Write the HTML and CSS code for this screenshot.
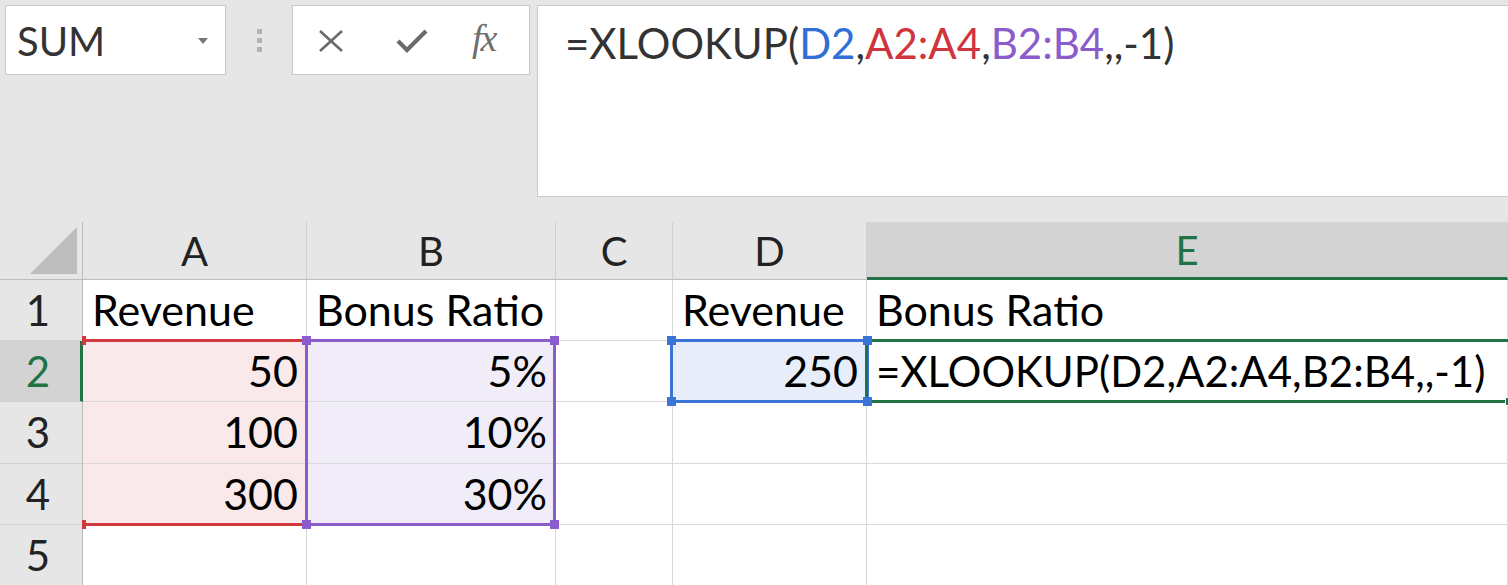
FILE: index.html
```html
<!DOCTYPE html>
<html>
<head>
<meta charset="utf-8">
<link rel="stylesheet" href="styles.css">
</head>
<body>
<div class="app">
  <div class="topbar">
    <div class="namebox"><span class="name">SUM</span><span class="caret"></span></div>
    <div class="grip"><i></i><i></i><i></i></div>
    <div class="fxbtns">
      <svg class="ic-x" width="28" height="26" viewBox="0 0 28 26"><path d="M3 3 L25 23 M25 3 L3 23" stroke="#6a6a6a" stroke-width="2.6" fill="none"/></svg>
      <svg class="ic-ok" width="34" height="26" viewBox="0 0 34 26"><path d="M3 13 L12 22 L31 3" stroke="#6a6a6a" stroke-width="4.2" fill="none" stroke-linejoin="miter"/></svg>
      <span class="fx">fx</span>
    </div>
    <div class="formula">=XLOOKUP(<span class="r-blue">D2</span>,<span class="r-red">A2:A4</span>,<span class="r-purple">B2:B4</span>,,-1)</div>
  </div>

  <div class="sheet">
    <div class="rw r0">
      <div class="h corner"><div class="tri"></div></div>
      <div class="h col">A</div>
      <div class="h col">B</div>
      <div class="h col">C</div>
      <div class="h col">D</div>
      <div class="h col sel-col">E</div>
    </div>
    <div class="rw r1">
      <div class="h row">1</div>
      <div class="c">Revenue</div>
      <div class="c">Bonus Ratio</div>
      <div class="c"></div>
      <div class="c">Revenue</div>
      <div class="c">Bonus Ratio</div>
    </div>
    <div class="rw r2">
      <div class="h row sel-row">2</div>
      <div class="c num red-bg">50</div>
      <div class="c num purple-bg">5%</div>
      <div class="c"></div>
      <div class="c num blue-bg">250</div>
      <div class="c fcell">=XLOOKUP(D2,A2:A4,B2:B4,,-1)</div>
    </div>
    <div class="rw r3">
      <div class="h row">3</div>
      <div class="c num red-bg">100</div>
      <div class="c num purple-bg">10%</div>
      <div class="c"></div>
      <div class="c"></div>
      <div class="c"></div>
    </div>
    <div class="rw r4">
      <div class="h row">4</div>
      <div class="c num red-bg">300</div>
      <div class="c num purple-bg">30%</div>
      <div class="c"></div>
      <div class="c"></div>
      <div class="c"></div>
    </div>
    <div class="rw r5">
      <div class="h row">5</div>
      <div class="c"></div>
      <div class="c"></div>
      <div class="c"></div>
      <div class="c"></div>
      <div class="c"></div>
    </div>

    <div class="rng rng-red"><i class="hd tl"></i><i class="hd bl"></i></div>
    <div class="rng rng-purple"><i class="hd tl"></i><i class="hd tr"></i><i class="hd bl"></i><i class="hd br"></i></div>
    <div class="rng rng-blue"><i class="hd tl"></i><i class="hd tr"></i><i class="hd bl"></i><i class="hd br"></i></div>
    <div class="active"><i class="fill"></i></div>
  </div>
</div>
</body>
</html>
```

FILE: styles.css
```css
* { box-sizing: border-box; }
html, body { margin: 0; padding: 0; }
body {
  width: 1508px;
  height: 585px;
  overflow: hidden;
  background: #e6e6e6;
  font-family: Lato, "Open Sans", sans-serif;
  color: #111;
}
.app { width: 1508px; height: 585px; overflow: hidden; }

/* ---------- top bar ---------- */
.topbar {
  height: 222px;
  display: flex;
  align-items: flex-start;
  padding: 5px 0 0 5px;
  background: #e6e6e6;
}
.namebox {
  width: 221px;
  height: 70px;
  background: #fff;
  border: 1px solid #c9c9c9;
  display: flex;
  align-items: center;
  justify-content: space-between;
  padding: 0 17px 0 11px;
}
.name { font-size: 40px; color: #333; line-height: 1; margin-top: 2px; }
.caret {
  width: 0; height: 0;
  border-left: 5px solid transparent;
  border-right: 5px solid transparent;
  border-top: 6px solid #777;
  margin-top: 2px;
}
.grip {
  margin-left: 31px;
  padding-top: 24px;
  display: flex;
  flex-direction: column;
  gap: 4px;
}
.grip i { display: block; width: 5px; height: 5px; background: #b2b2b2; }
.fxbtns {
  margin-left: 30px;
  width: 238px;
  height: 70px;
  background: #fff;
  border: 1px solid #c9c9c9;
  display: flex;
  align-items: center;
  padding-left: 24px;
}
.ic-x { margin-right: 50px; margin-top: 1px; }
.ic-ok { margin-right: 43px; margin-top: 1px; }
.fx {
  font-family: "Liberation Serif", serif;
  font-style: italic;
  font-size: 38px;
  color: #6e6e6e;
  letter-spacing: -2px;
  margin-top: -5px;
}
.formula {
  flex: 1;
  margin-left: 7px;
  margin-right: -10px;
  height: 192px;
  background: #fff;
  border: 1px solid #c9c9c9;
  padding: 12px 0 0 27px;
  font-size: 42px;
  line-height: 50px;
  color: #333;
}
.r-blue { color: #2f6fd6; }
.r-red { color: #d0343c; }
.r-purple { color: #8b5ccb; }

/* ---------- sheet ---------- */
.sheet {
  display: grid;
  grid-template-columns: 83px 224px 249px 117px 194px 1fr;
  grid-template-rows: 58px 61px 61px 62px 61px 61px;
  background: #fff;
}
.rw { display: contents; }
.r0 > * { grid-row: 1; }
.r1 > * { grid-row: 2; }
.r2 > * { grid-row: 3; }
.r3 > * { grid-row: 4; }
.r4 > * { grid-row: 5; }
.r5 > * { grid-row: 6; }
.rw > :nth-child(1) { grid-column: 1; }
.rw > :nth-child(2) { grid-column: 2; }
.rw > :nth-child(3) { grid-column: 3; }
.rw > :nth-child(4) { grid-column: 4; }
.rw > :nth-child(5) { grid-column: 5; }
.rw > :nth-child(6) { grid-column: 6; }

.h {
  background: #e6e6e6;
  color: #222;
  text-align: center;
  font-size: 40px;
}
.col {
  border-right: 1px solid #cfcfcf;
  border-bottom: 1px solid #bcbcbc;
  line-height: 56px;
  padding-top: 1px;
}
.corner {
  border-right: 1px solid #bcbcbc;
  border-bottom: 1px solid #bcbcbc;
  display: flex;
  justify-content: flex-end;
  align-items: flex-end;
  padding: 0 5px 5px 0;
}
.tri {
  width: 47px;
  height: 47px;
  background: #bdbdbd;
  clip-path: polygon(100% 0, 100% 100%, 0 100%);
}
.row {
  border-right: 1px solid #bcbcbc;
  border-bottom: 1px solid #d2d2d2;
  font-size: 42px;
  line-height: 60px;
  padding-right: 6px;
}
.sel-col {
  background: #d3d3d3;
  color: #217346;
  border-bottom: 3px solid #217346;
  line-height: 54px;
}
.sel-row {
  background: #d3d3d3;
  color: #217346;
  border-right: 3px solid #217346;
  padding-right: 4px;
}
.c {
  border-right: 1px solid #d9d9d9;
  border-bottom: 1px solid #d9d9d9;
  font-size: 43px;
  line-height: 60px;
  padding: 0 8px 0 9px;
  white-space: nowrap;
  color: #000;
}
.fcell { font-size: 42px; }
.num { text-align: right; }
.red-bg { background: #fae9ea; }
.purple-bg { background: #f0ecf8; }
.blue-bg { background: #e8eef9; }

/* ---------- range highlights (overlays) ---------- */
.rng, .active {
  position: relative;
  pointer-events: none;
}
.rng-red {
  grid-column: 2;
  grid-row: 3 / 6;
  margin: -2px 0 -1px 0;
  border-top: 3px solid #d0393f;
  border-bottom: 3px solid #d0393f;
}
.rng-purple {
  grid-column: 3;
  grid-row: 3 / 6;
  margin: -2px 0 -1px -2px;
  border: 3px solid #8b5ccb;
}
.rng-blue {
  grid-column: 5;
  grid-row: 3;
  margin: -2px -2px -1px -3px;
  border: 3px solid #3a74d7;
}
.active {
  grid-column: 6;
  grid-row: 3;
  margin: -2px -3px -1px -2px;
  border: 3px solid #217346;
}
.hd {
  position: absolute;
  width: 9px;
  height: 9px;
  z-index: 3;
}
.rng-red .hd { background: #d0393f; width: 4px; }
.rng-purple .hd { background: #8b5ccb; }
.rng-blue .hd { background: #3a74d7; }
.tl { left: -6px; top: -6px; }
.tr { right: -6px; top: -6px; }
.bl { left: -6px; bottom: -6px; }
.br { right: -6px; bottom: -6px; }
.rng-red .tl, .rng-red .bl { left: -1px; }
.fill {
  position: absolute;
  right: -6px;
  bottom: -6px;
  width: 9px;
  height: 9px;
  background: #217346;
  border: 1px solid #fff;
}
```
